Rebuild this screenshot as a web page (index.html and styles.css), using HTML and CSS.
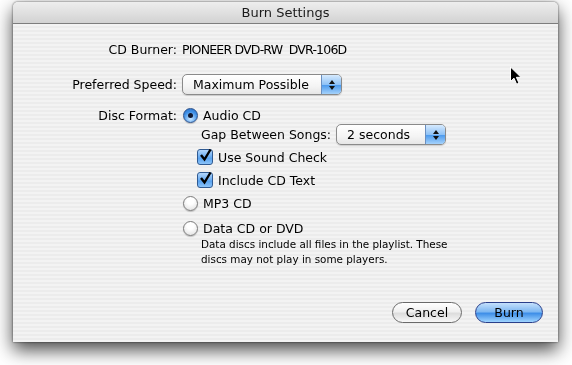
FILE: index.html
```html
<!DOCTYPE html>
<html>
	<head>
		<link rel="stylesheet" href="styles.css">
	</head>
	<body>
		<div class="window">
			<div class="titlebar">Burn Settings</div>
			<div class="content">
				<div class="row burner">
					<div class="label">CD Burner:</div>
					<div class="value">PIONEER DVD-RW&nbsp; DVR-106D</div>
				</div>
				<div class="row speed">
					<div class="label">Preferred Speed:</div>
					<div class="popup popup-speed">
						<span class="popup-text">Maximum Possible</span>
						<span class="popup-arrows">
							<svg width="8" height="12" viewBox="0 0 8 12"><path d="M4 1 L7 5 L1 5 Z M4 11 L7 7 L1 7 Z" fill="#111"/></svg>
						</span>
					</div>
				</div>
				<div class="row disc">
					<div class="label">Disc Format:</div>
					<div class="options">
						<div class="opt opt-audio">
							<span class="radio on"></span>
							<span>Audio CD</span>
						</div>
						<div class="opt opt-gap">
							<span>Gap Between Songs:</span>
							<div class="popup popup-gap">
								<span class="popup-text">2 seconds</span>
								<span class="popup-arrows">
									<svg width="8" height="12" viewBox="0 0 8 12"><path d="M4 1 L7 5 L1 5 Z M4 11 L7 7 L1 7 Z" fill="#111"/></svg>
								</span>
							</div>
						</div>
						<div class="opt check-row first">
							<span class="checkbox"><svg width="15" height="15" viewBox="0 0 15 15"><path d="M3 7 L6.5 11.5 L12.5 1.5" fill="none" stroke="#000" stroke-width="2.4"/></svg></span>
							<span>Use Sound Check</span>
						</div>
						<div class="opt check-row">
							<span class="checkbox"><svg width="15" height="15" viewBox="0 0 15 15"><path d="M3 7 L6.5 11.5 L12.5 1.5" fill="none" stroke="#000" stroke-width="2.4"/></svg></span>
							<span>Include CD Text</span>
						</div>
						<div class="opt opt-mp3">
							<span class="radio"></span>
							<span>MP3 CD</span>
						</div>
						<div class="opt opt-data">
							<span class="radio"></span>
							<span>Data CD or DVD</span>
						</div>
						<p class="note">Data discs include all files in the playlist. These<br>discs may not play in some players.</p>
					</div>
				</div>
				<div class="buttons">
					<button class="btn cancel">Cancel</button>
					<button class="btn burn">Burn</button>
				</div>
			</div>
		</div>
		<svg class="cursor" width="14" height="20" viewBox="0 0 14 20">
			<path d="M1.5 1 L1.5 15.5 L5 12.2 L7.6 18.2 L10 17.2 L7.4 11.3 L12 11.3 Z" fill="#000" stroke="#fff" stroke-width="1"/>
		</svg>
	</body>
</html>
```

FILE: styles.css
```css
html {
	background: #fff;
}

body {
	margin: 0;
	padding-top: 2px;
	height: 363px;
	font-family: "DejaVu Sans", sans-serif;
	font-size: 12.5px;
	color: #000;
}

.window {
	margin-left: 13px;
	width: 545px;
	height: 340px;
	display: flex;
	flex-direction: column;
	border-radius: 5px 5px 0 0;
	background: repeating-linear-gradient(#ececec 0 2px, #f3f3f3 2px 4px);
	filter: drop-shadow(0 0 1px rgba(0, 0, 0, 0.6)) drop-shadow(0 8px 9px rgba(0, 0, 0, 0.7));
}

.titlebar {
	height: 21px;
	line-height: 21px;
	text-align: center;
	font-size: 13px;
	color: #1a1a1a;
	border-bottom: 1px solid #7d7d7d;
	border-radius: 5px 5px 0 0;
	background: linear-gradient(#eeeeee, #d2d2d2);
}

.content {
	flex: 1;
	display: flex;
	flex-direction: column;
	padding: 15px 15px 19px 0;
}

.row {
	display: flex;
	align-items: center;
}

.label {
	width: 164px;
	margin-right: 5px;
	text-align: right;
}

.burner {
	height: 20px;
}

.burner .value {
	letter-spacing: -0.8px;
}

.speed {
	height: 21px;
	margin-top: 15px;
}

.disc {
	align-items: flex-start;
	margin-top: 12px;
}

.disc .label {
	line-height: 17px;
}

.options {
	display: flex;
	flex-direction: column;
}

.opt {
	display: flex;
	align-items: center;
}

.opt-audio {
	height: 17px;
}

.opt-gap {
	height: 21px;
	padding-left: 19px;
	gap: 5px;
}

.check-row {
	height: 18px;
	margin-top: 5px;
	padding-left: 15px;
	gap: 5px;
}

.check-row.first {
	margin-top: 3px;
}

.opt-mp3 {
	height: 18px;
	margin-top: 5px;
}

.opt-data {
	height: 18px;
	margin-top: 7px;
}

.radio {
	width: 13px;
	height: 13px;
	margin: 0 5px 0 1px;
	border: 1px solid #7a7a7a;
	border-radius: 50%;
	background: radial-gradient(circle at 50% 30%, #ffffff 30%, #dcdcdc 100%);
	box-shadow: 0 1px 1px rgba(0, 0, 0, 0.2);
	position: relative;
}

.radio.on {
	border-color: #2a4f8a;
	background: radial-gradient(circle at 50% 75%, #b6dcff 10%, #3d8fe6 60%, #2b6ec4 100%);
}

.radio.on::after {
	content: "";
	position: absolute;
	left: 4px;
	top: 4px;
	width: 5px;
	height: 5px;
	border-radius: 50%;
	background: #101830;
}

.checkbox {
	width: 14px;
	height: 14px;
	border: 1px solid #2f5a92;
	border-radius: 3px;
	background: linear-gradient(#b3d6fb, #5aa3ef 60%, #8cc4fa);
	position: relative;
}

.checkbox svg {
	position: absolute;
	left: 0;
	top: -2px;
}

.note {
	margin: 0;
	padding-left: 19px;
	font-size: 10.4px;
	line-height: 15px;
}

.popup {
	height: 19px;
	display: flex;
	align-items: center;
	border: 1px solid #8a8a8a;
	border-radius: 5px;
	background: linear-gradient(#ffffff, #f4f4f4 60%, #e6e6e6);
	box-shadow: 0 1px 1px rgba(0, 0, 0, 0.15);
	overflow: hidden;
}

.popup-speed {
	width: 158px;
}

.popup-gap {
	width: 108px;
}

.popup-text {
	flex: 1;
	padding-left: 10px;
}

.popup-arrows {
	width: 19px;
	height: 100%;
	display: flex;
	align-items: center;
	justify-content: center;
	border-left: 1px solid #6a8fc0;
	background: linear-gradient(#d6eafe, #8fc2f6 50%, #4f9cee 55%, #a5d2fb);
}

.buttons {
	margin-top: auto;
	display: flex;
	justify-content: flex-end;
	gap: 13px;
}

.btn {
	height: 21px;
	padding: 0;
	font-family: "DejaVu Sans", sans-serif;
	font-size: 12.5px;
	color: #000;
	border-radius: 11px;
}

.cancel {
	width: 70px;
	border: 1px solid #6a6a6a;
	background: linear-gradient(#ffffff, #f0f0f0 45%, #dddddd 55%, #f8f8f8);
}

.burn {
	width: 68px;
	border: 1px solid #2a3f8a;
	background: linear-gradient(#c4e0fc, #7fb8f2 45%, #3f8fe8 55%, #9fd4ff);
}

.cursor {
	position: absolute;
	left: 509px;
	top: 66px;
}
```
